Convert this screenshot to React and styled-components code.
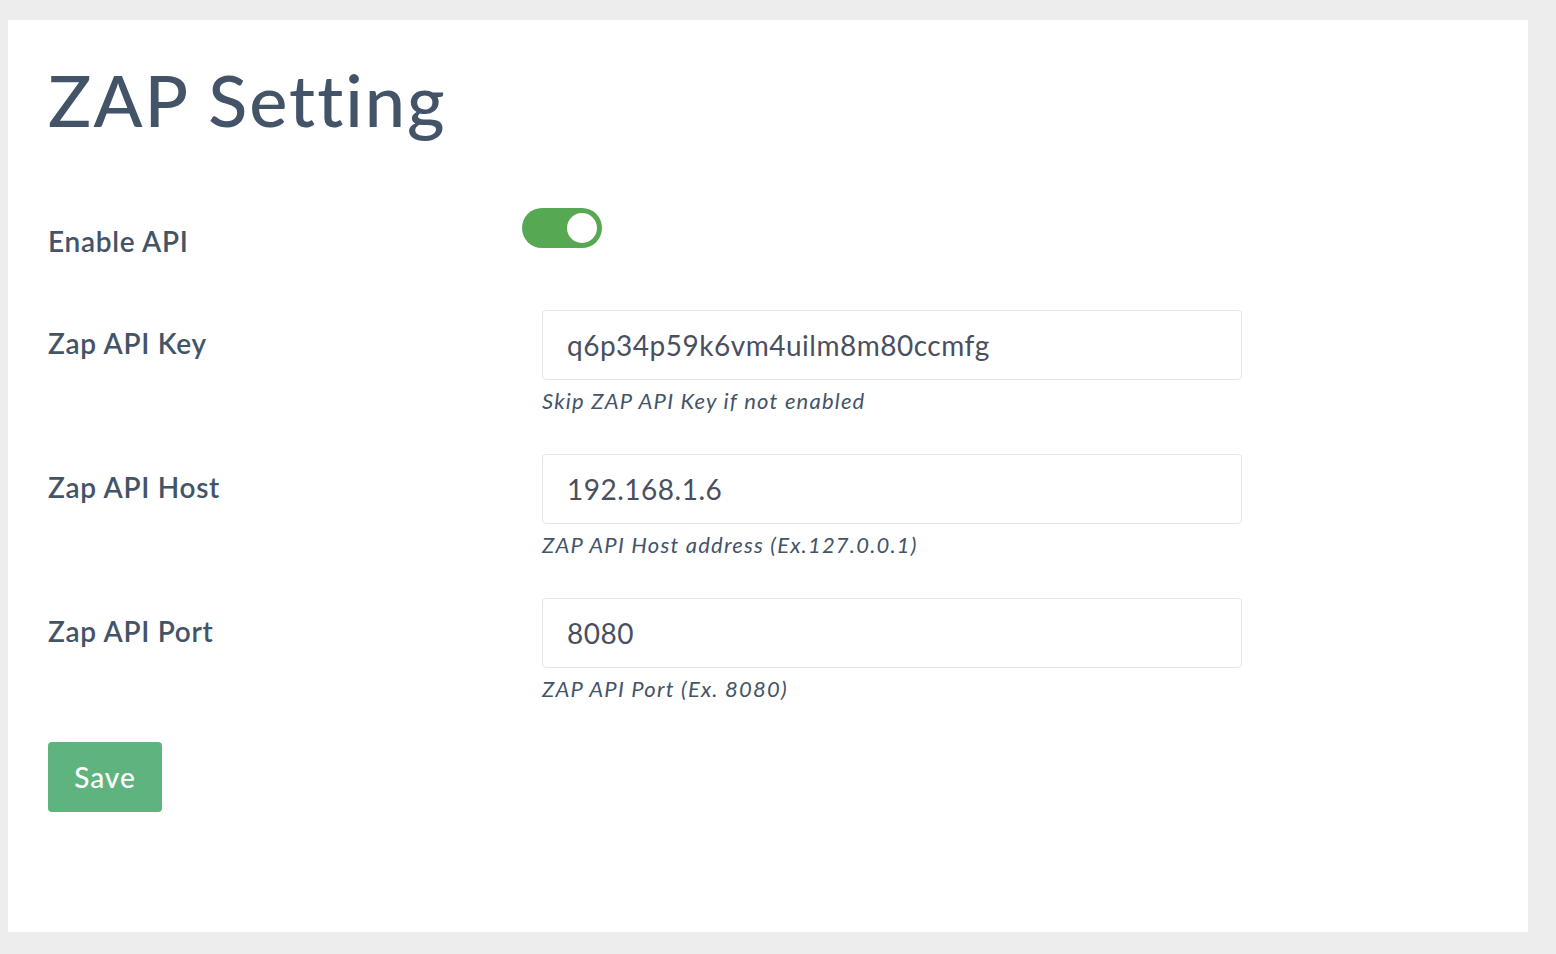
import React from "react";
import styled, { createGlobalStyle } from "styled-components";

const GlobalStyle = createGlobalStyle`
  html, body {
    margin: 0;
    padding: 0;
    background: #ededed;
  }
  body {
    font-family: Lato, "Open Sans", sans-serif;
    color: #435468;
  }
`;

const Page = styled.div`
  padding: 20px 28px 22px 8px;
  box-sizing: border-box;
  height: 954px;
`;

const Card = styled.div`
  background: #ffffff;
  height: 912px;
  box-sizing: border-box;
  padding: 36px 40px 0 40px;
`;

const Title = styled.h1`
  margin: 0 0 66px 0;
  font-size: 72px;
  line-height: 86px;
  font-weight: 500;
  letter-spacing: 2px;
  color: #435468;
`;

const Form = styled.form`
  display: flex;
  flex-direction: column;
  gap: 40px;
`;

const Row = styled.div`
  display: grid;
  grid-template-columns: ${({ $labelWidth }) => $labelWidth || 494}px 700px;
  min-height: ${({ $minHeight }) => $minHeight || 0}px;
`;

const Label = styled.label`
  padding-top: 16px;
  font-size: 28px;
  line-height: 34px;
  font-weight: 600;
  letter-spacing: 0.7px;
  color: #435468;
`;

const Field = styled.div`
  display: flex;
  flex-direction: column;
`;

const Input = styled.input`
  box-sizing: border-box;
  width: 700px;
  height: 70px;
  padding: 0 24px;
  border: 1px solid #e4e4e9;
  border-radius: 4px;
  font-family: inherit;
  font-size: 28px;
  letter-spacing: 0.5px;
  color: #4a4f5e;
  outline: none;
`;

const Help = styled.small`
  margin-top: 8px;
  font-size: 22px;
  line-height: 26px;
  font-style: italic;
  letter-spacing: 1.2px;
  color: #435468;
`;

const Toggle = styled.span`
  position: relative;
  display: inline-block;
  width: 80px;
  height: 40px;
  border-radius: 20px;
  background: ${({ $on }) => ($on ? "#57a852" : "#cccccc")};
`;

const Knob = styled.span`
  position: absolute;
  top: 5px;
  left: ${({ $on }) => ($on ? "45px" : "5px")};
  width: 30px;
  height: 30px;
  border-radius: 50%;
  background: #ffffff;
`;

const SaveButton = styled.button`
  align-self: flex-start;
  width: 114px;
  height: 70px;
  border: none;
  border-radius: 4px;
  background: #5fb37f;
  color: #ffffff;
  font-family: inherit;
  font-size: 28px;
  font-weight: 500;
  letter-spacing: 1px;
  cursor: pointer;
`;

const fields = [
  { label: "Zap API Key", value: "q6p34p59k6vm4uilm8m80ccmfg", help: "Skip ZAP API Key if not enabled" },
  { label: "Zap API Host", value: "192.168.1.6", help: "ZAP API Host address (Ex.127.0.0.1)" },
  { label: "Zap API Port", value: "8080", help: "ZAP API Port (Ex. 8080)" },
];

const App = () => {
  return (
    <Page>
      <GlobalStyle />
      <Card>
        <Title>ZAP Setting</Title>
        <Form onSubmit={(e) => e.preventDefault()}>
          <Row $minHeight={62} $labelWidth={474}>
            <Label>Enable API</Label>
            <div>
              <Toggle $on>
                <Knob $on />
              </Toggle>
            </div>
          </Row>
          {fields.map((f) => (
            <Row key={f.label}>
              <Label>{f.label}</Label>
              <Field>
                <Input defaultValue={f.value} />
                <Help>{f.help}</Help>
              </Field>
            </Row>
          ))}
          <SaveButton type="submit">Save</SaveButton>
        </Form>
      </Card>
    </Page>
  );
};

export default App;
